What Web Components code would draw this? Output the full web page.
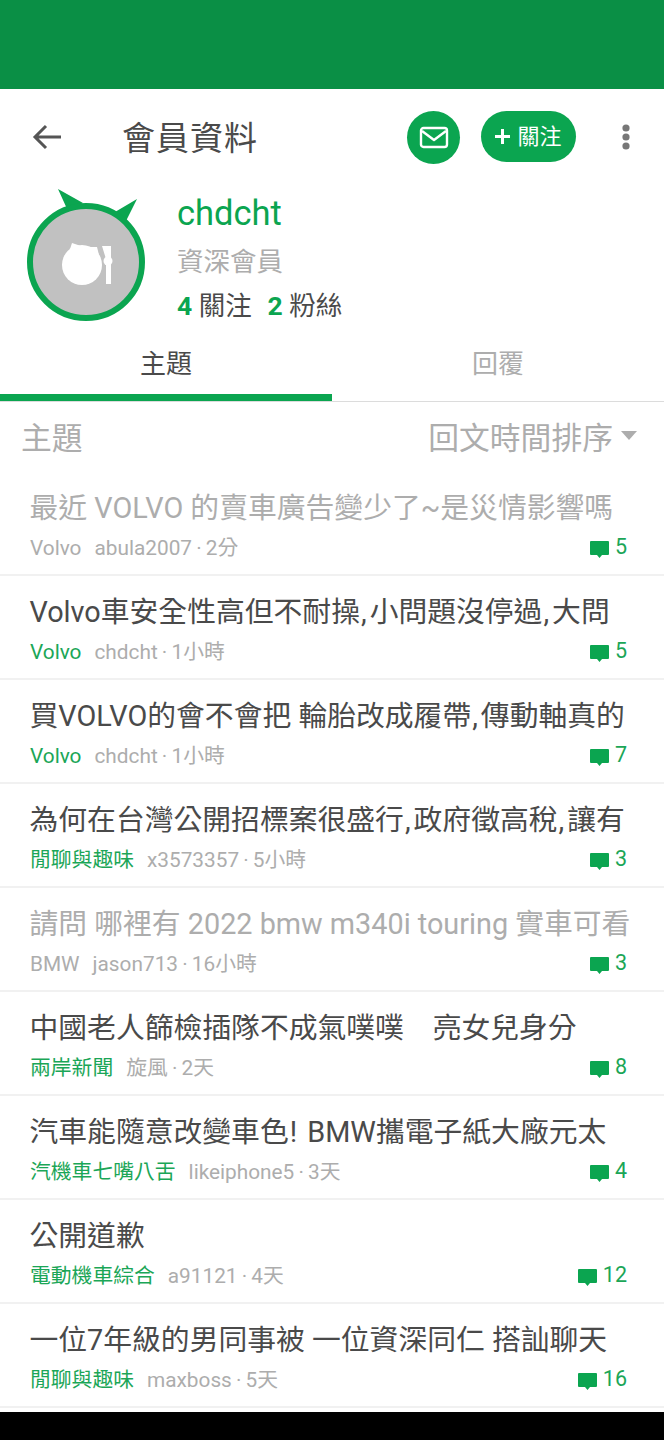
<!DOCTYPE html>
<html lang="zh-Hant">
<head>
<meta charset="utf-8">
<title>會員資料</title>
<style>
  html, body { margin: 0; padding: 0; background: #fff; }
  body { font-family: Roboto, "Noto Sans CJK TC", sans-serif; }
  /* punctuation in the titles is wider than Roboto's */
  .p { letter-spacing: 3px; padding-left: 1px; }
</style>
</head>
<body>
<member-page>
  <app-header title-text="會員資料"></app-header>
  <member-profile name="chdcht" rank="資深會員" following="4" fans="2"></member-profile>
  <member-tabs first="主題" second="回覆"></member-tabs>
  <list-head label="主題" sort="回文時間排序"></list-head>
  <topic-row read board="Volvo" user="abula2007" age="2分" count="5">最近 VOLVO 的賣車廣告變少了~是災情影響嗎</topic-row>
  <topic-row board="Volvo" user="chdcht" age="1小時" count="5">Volvo車安全性高但不耐操<span class="p">,</span>小問題沒停過<span class="p">,</span>大問</topic-row>
  <topic-row board="Volvo" user="chdcht" age="1小時" count="7">買VOLVO的會不會把 輪胎改成履帶<span class="p">,</span>傳動軸真的</topic-row>
  <topic-row board="閒聊與趣味" user="x3573357" age="5小時" count="3">為何在台灣公開招標案很盛行<span class="p">,</span>政府徵高稅<span class="p">,</span>讓有</topic-row>
  <topic-row read board="BMW" user="jason713" age="16小時" count="3">請問 哪裡有 2022 bmw m340i touring 實車可看</topic-row>
  <topic-row board="兩岸新聞" user="旋風" age="2天" count="8">中國老人篩檢插隊不成氣噗噗　亮女兒身分</topic-row>
  <topic-row board="汽機車七嘴八舌" user="likeiphone5" age="3天" count="4">汽車能隨意改變車色<span class="p">!</span> BMW攜電子紙大廠元太</topic-row>
  <topic-row board="電動機車綜合" user="a91121" age="4天" count="12">公開道歉</topic-row>
  <topic-row board="閒聊與趣味" user="maxboss" age="5天" count="16">一位7年級的男同事被 一位資深同仁 搭訕聊天</topic-row>
</member-page>

<script>
// small helper, every element has the same boilerplate
function shadow(el, html) {
  el.attachShadow({ mode: 'open' }).innerHTML = html;
}

class MemberPage extends HTMLElement {
  connectedCallback() {
    shadow(this, `<style>
      :host { display: flex; flex-direction: column; width: 664px; height: 1440px; overflow: hidden; background: #fff; }
      .status { flex: none; height: 89px; background: #0a8f45; }
      .body { flex: 1; min-height: 0; overflow: hidden; }
      .nav { flex: none; height: 28px; background: #000; }
    </style>
    <div class="status"></div>
    <div class="body"><slot></slot></div>
    <div class="nav"></div>`);
  }
}

class AppHeader extends HTMLElement {
  connectedCallback() {
    shadow(this, `<style>
      :host { display: flex; align-items: center; height: 96px; padding: 0 0 0 32px; color: #424242; }
      .back { width: 30px; height: 30px; flex: none; display: block; }
      h1 { margin: 2px 0 0 60px; flex: 1; font: 400 33px/1 Roboto, "Noto Sans CJK TC", sans-serif; letter-spacing: 1px; color: #4a4a4a; }
      .mail { flex: none; width: 53px; height: 53px; border-radius: 50%; background: #0ba550; display: flex; align-items: center; justify-content: center; }
      .follow { flex: none; margin: -1px 0 0 21px; width: 95px; height: 51px; border-radius: 26px; background: #0ba550; color: #fff; display: flex; align-items: center; justify-content: center; gap: 7px; font: 400 22px/1 Roboto, "Noto Sans CJK TC", sans-serif; }
      .more { flex: none; margin: 0 34px 0 46px; display: flex; }
    </style>
    <svg class="back" viewBox="0 0 30 30" fill="none" stroke="#555" stroke-width="3"><path d="M29 15H3M14 4 3 15l11 11"/></svg>
    <h1>${this.getAttribute('title-text')}</h1>
    <div class="mail"><svg width="30" height="23" viewBox="0 0 30 23" fill="none" stroke="#fff" stroke-width="2.4" stroke-linejoin="round"><rect x="2" y="2" width="26" height="19" rx="2.5"/><path d="M3 5l12 9 12-9"/></svg></div>
    <div class="follow"><svg width="15" height="15" viewBox="0 0 15 15" fill="none" stroke="#fff" stroke-width="3"><path d="M7.500 0v15M0 7.500h15"/></svg><span>關注</span></div>
    <div class="more"><svg width="8" height="26" viewBox="0 0 8 26" fill="#777"><circle cx="4" cy="4" r="3.6"/><circle cx="4" cy="13" r="3.6"/><circle cx="4" cy="22" r="3.6"/></svg></div>`);
  }
}

class MemberProfile extends HTMLElement {
  connectedCallback() {
    const a = n => this.getAttribute(n);
    shadow(this, `<style>
      :host { display: flex; height: 150px; padding: 0 0 0 27px; }
      .avatar { flex: none; width: 118px; height: 136px; display: block; }
      .info { margin-left: 32px; display: flex; flex-direction: column; align-items: flex-start; }
      .name { font-size: 34.5px; line-height: 40px; margin-top: 8px; color: #0ba550; }
      .rank { font-size: 26.5px; line-height: 34px; margin-top: 12px; color: #adadad; }
      .stats { font-size: 26.5px; line-height: 34px; margin-top: 10px; color: #4a4a4a; }
      b { color: #0ba550; font-weight: 700; }
      .gap { margin-left: 9px; }
    </style>
    <svg class="avatar" viewBox="0 0 118 136">
      <path d="M31 4 56 18 41 26Z M110 14 88 27 99 36Z" fill="#0ba550"/>
      <circle cx="59" cy="77" r="56" fill="#c1c1c1" stroke="#0ba550" stroke-width="6"/>
      <path d="M45 58 54 61 42 67Z M70 62 61 62 72 70Z" fill="#fff"/>
      <circle cx="55" cy="80" r="20" fill="#fff"/>
      <path d="M75 61H84V99H79V74Z" fill="#fff"/>
      <circle cx="81" cy="76" r="4.500" fill="#fff"/>
    </svg>
    <div class="info">
      <div class="name">${a('name')}</div>
      <div class="rank">${a('rank')}</div>
      <div class="stats"><b>${a('following')}</b> 關注 <b class="gap">${a('fans')}</b> 粉絲</div>
    </div>`);
  }
}

class MemberTabs extends HTMLElement {
  connectedCallback() {
    shadow(this, `<style>
      :host { display: grid; grid-template-columns: 1fr 1fr; height: 66px; border-bottom: 1px solid #dcdcdc; margin-top: -6px; padding-top: 6px; }
      div { display: flex; justify-content: center; padding-top: 11px; box-sizing: border-box; height: 66px; font-size: 26px; line-height: 36px; color: #adadad; }
      .on { color: #4a4a4a; border-bottom: 7px solid #0ba550; }
    </style>
    <div class="on">${this.getAttribute('first')}</div>
    <div>${this.getAttribute('second')}</div>`);
  }
}

class ListHead extends HTMLElement {
  connectedCallback() {
    shadow(this, `<style>
      :host { display: flex; justify-content: space-between; align-items: center; box-sizing: border-box; height: 70px; padding: 0 27px 4px 21px; font-size: 30.8px; color: #adadad; }
      .sort { display: flex; align-items: center; gap: 8px; }
      .tri { width: 0; height: 0; border: 8.5px solid transparent; border-top: 9px solid #adadad; border-bottom: 0; }
    </style>
    <span>${this.getAttribute('label')}</span>
    <span class="sort">${this.getAttribute('sort')}<i class="tri"></i></span>`);
  }
}

class TopicRow extends HTMLElement {
  connectedCallback() {
    const a = n => this.getAttribute(n);
    shadow(this, `<style>
      :host { display: block; box-sizing: border-box; height: 104px; padding: 0 37px 0 30px; border-bottom: 2px solid #f1f1f1; }
      .title { height: 60px; padding-top: 16px; box-sizing: border-box; margin: 0 -37px 0 -.5px; font-size: 28.8px; line-height: 40px; white-space: nowrap; color: #4a4a4a; }
      :host([read]) .title { color: #adadad; }
      .meta { display: flex; align-items: baseline; box-sizing: border-box; height: 30px; padding-top: 3px; font-size: 20.8px; line-height: 26px; color: #adadad; }
      .who { word-spacing: -1px; }
      .board { color: #1ba657; margin-right: 13px; }
      :host([read]) .board { color: #adadad; }
      .count { margin: -3px 0 0 auto; align-self: center; display: flex; align-items: center; gap: 6px; color: #1ba657; font-size: 21.5px; }
      svg { display: block; margin-top: 4px; }
    </style>
    <div class="title"><slot></slot></div>
    <div class="meta">
      <span class="board">${a('board')}</span>
      <span class="who">${a('user')} · ${a('age')}</span>
      <span class="count"><svg width="19" height="17" viewBox="0 0 19 17" fill="#0ba550"><path d="M0 1Q0 0 1 0H18Q19 0 19 1V13Q19 14 18 14H12L9.500 17 7 14H1Q0 14 0 13Z"/></svg>${a('count')}</span>
    </div>`);
  }
}

customElements.define('member-page', MemberPage);
customElements.define('app-header', AppHeader);
customElements.define('member-profile', MemberProfile);
customElements.define('member-tabs', MemberTabs);
customElements.define('list-head', ListHead);
customElements.define('topic-row', TopicRow);
</script>
</body>
</html>
